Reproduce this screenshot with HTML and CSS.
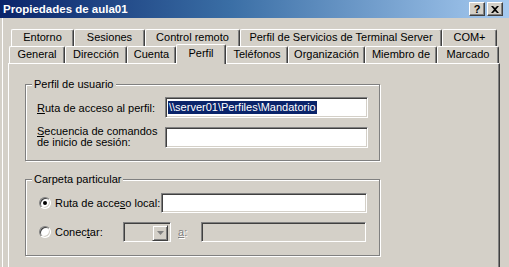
FILE: index.html
```html
<!DOCTYPE html>
<html>
<head>
<meta charset="utf-8">
<link rel="stylesheet" href="styles.css">
</head>
<body>
<div class="window">
  <div class="titlebar">
    <span class="title">Propiedades de aula01</span>
    <div class="tbtns">
      <span class="tbtn help">?</span>
      <span class="tbtn close"><svg width="8" height="7" viewBox="0 0 8 7"><path d="M0 0h2l2 2 2-2h2L5 3.5 8 7H6L4 5 2 7H0l3-3.5z" fill="#000"/></svg></span>
    </div>
  </div>
  <div class="client">
    <div class="tabrow back">
      <div class="tab t-ent">Entorno</div>
      <div class="tab t-ses">Sesiones</div>
      <div class="tab t-ctl">Control remoto</div>
      <div class="tab t-ts">Perfil de Servicios de Terminal Server</div>
      <div class="tab t-com">COM+</div>
    </div>
    <div class="tabrow front">
      <div class="tab t-gen">General</div>
      <div class="tab t-dir">Dirección</div>
      <div class="tab t-cue">Cuenta</div>
      <div class="tab t-per sel">Perfil</div>
      <div class="tab t-tel">Teléfonos</div>
      <div class="tab t-org">Organización</div>
      <div class="tab t-mie">Miembro de</div>
      <div class="tab t-mar">Marcado</div>
    </div>
    <div class="panel">
      <div class="group g1">
        <span class="legend">Perfil de usuario</span>
        <div class="frow r1">
          <label class="lbl"><u>R</u>uta de acceso al perfil:</label>
          <div class="field"><span class="selected">\\server01\Perfiles\Mandatorio</span></div>
        </div>
        <div class="frow r2">
          <label class="lbl two"><u>S</u>ecuencia de comandos<br>de inicio de sesión:</label>
          <div class="field"></div>
        </div>
      </div>
      <div class="group g2">
        <span class="legend">Carpeta particular</span>
        <div class="frow r3">
          <span class="radio checked"></span>
          <label class="rlbl">Ruta de acce<u>s</u>o local:</label>
          <div class="field local"></div>
        </div>
        <div class="frow r4">
          <span class="radio"></span>
          <label class="rlbl conn">Conec<u>t</u>ar:</label>
          <div class="combo"><span class="dd"><svg width="7" height="4" viewBox="0 0 7 4"><path d="M0 0h7L3.5 4z" fill="#808080"/></svg></span></div>
          <span class="alabel"><u>a</u>:</span>
          <div class="field disabled"></div>
        </div>
      </div>
    </div>
  </div>
</div>
</body>
</html>
```
FILE: styles.css
```css
* { box-sizing: border-box; }
html, body { margin: 0; padding: 0; background: #d4d0c8; }
body { font-family: "Liberation Sans", Arial, sans-serif; font-size: 11px; color: #000; }
.window { width: 509px; height: 267px; overflow: hidden; background: #d4d0c8; position: relative; }
.titlebar {
  height: 18px; display: flex; align-items: center; justify-content: space-between;
  background: linear-gradient(to right, #0a246a 0%, #3a6ea5 45%, #a6caf0 100%);
  padding: 0 6px 0 3px;
}
.title { color: #fff; font-weight: bold; font-size: 11.5px; }
.tbtns { display: flex; gap: 2px; }
.tbtn {
  width: 16px; height: 14px; background: #d4d0c8; display: flex; align-items: center; justify-content: center;
  border-top: 1px solid #fff; border-left: 1px solid #fff; border-right: 1px solid #404040; border-bottom: 1px solid #404040;
  box-shadow: inset -1px -1px #808080;
  font-weight: bold; font-size: 11px; line-height: 1;
}
.client { padding: 11px 0 0 8px; height: 249px; box-shadow: inset 2px 0 #d4d0c8, inset 3px 0 #fff; }
.tabrow { display: flex; height: 17px; }
.tabrow.back { margin-left: 3px; }
.tabrow.front { margin-left: 1px; }
.tab {
  height: 17px; flex: none; text-align: center; line-height: 15px; white-space: nowrap;
  border-top: 1px solid #fff; border-left: 1px solid #fff; border-right: 1px solid #404040;
  box-shadow: inset -1px 0 #808080; border-radius: 2px 2px 0 0; background: #d4d0c8;
}
.t-ent { width: 63px; } .t-ses { width: 71px; } .t-ctl { width: 95px; } .t-ts { width: 202px; } .t-com { width: 55px; }
.t-gen { width: 56px; } .t-dir { width: 62px; } .t-cue { width: 49px; } .t-per { width: 50px; }
.t-tel { width: 62px; } .t-org { width: 77px; } .t-mie { width: 72px; } .t-mar { width: 62px; }
.tab.sel { height: 20px; margin-top: -2px; position: relative; z-index: 1; line-height: 16px; }
.panel {
  width: 492px; height: 220px;
  border-top: 1px solid #fff; border-left: 1px solid #fff; border-right: 1px solid #404040;
  box-shadow: inset -1px 0 #808080;
  padding: 20px 0 0 16px;
}
.group {
  position: relative; width: 355px;
  border: 1px solid #808080;
  box-shadow: inset 1px 1px #fff, 1px 1px #fff;
}
.g1 { height: 77px; padding: 12px 0 0 11px; }
.g2 { height: 77px; margin-top: 18px; padding: 12px 0 0 13px; }
.legend { position: absolute; left: 6px; top: -8px; padding: 0 2px; background: #d4d0c8; line-height: 14px; }
.frow { display: flex; align-items: center; }
.lbl { width: 128px; flex: none; }
.lbl.two { line-height: 11px; }
.r2 { margin-top: 8px; }
.field {
  width: 203px; height: 21px; background: #fff; flex: none;
  border-top: 1px solid #808080; border-left: 1px solid #808080; border-right: 1px solid #fff; border-bottom: 1px solid #fff;
  box-shadow: inset 1px 1px #404040, inset -1px -1px #d4d0c8;
  padding: 3px 0 0 2px; line-height: 13px;
}
.selected { background: #0a246a; color: #fff; display: inline-block; padding: 0 1px; }
.r3 { margin-top: 1px; }
.r4 { margin-top: 9px; }
.radio {
  width: 12px; height: 12px; border-radius: 50%; flex: none; background: #fff; position: relative;
  border: 1px solid; border-color: #808080 #fff #fff #808080;
  box-shadow: inset 1px 1px #404040, inset -1px -1px #d4d0c8;
}
.radio.checked::after { content: ""; position: absolute; left: 3px; top: 3px; width: 4px; height: 4px; border-radius: 50%; background: #000; }
.rlbl { margin-left: 4px; width: 106px; flex: none; }
.rlbl.conn { width: 68px; }
.field.local { width: 206px; height: 20px; }
.combo {
  width: 48px; height: 20px; flex: none; position: relative; display: flex; justify-content: flex-end; padding: 2px;
  border-top: 1px solid #808080; border-left: 1px solid #808080; border-right: 1px solid #fff; border-bottom: 1px solid #fff;
  box-shadow: inset 1px 1px #404040, inset -1px -1px #d4d0c8;
}
.dd {
  width: 16px; height: 16px; display: flex; align-items: center; justify-content: center; background: #d4d0c8;
  border-top: 1px solid #d4d0c8; border-left: 1px solid #d4d0c8; border-right: 1px solid #404040; border-bottom: 1px solid #404040;
  box-shadow: inset 1px 1px #fff, inset -1px -1px #808080;
}
.alabel { color: #808080; text-shadow: 1px 1px #fff; margin-left: 7px; width: 23px; flex: none; }
.field.disabled { background: #d4d0c8; width: 165px; height: 20px; }
```
